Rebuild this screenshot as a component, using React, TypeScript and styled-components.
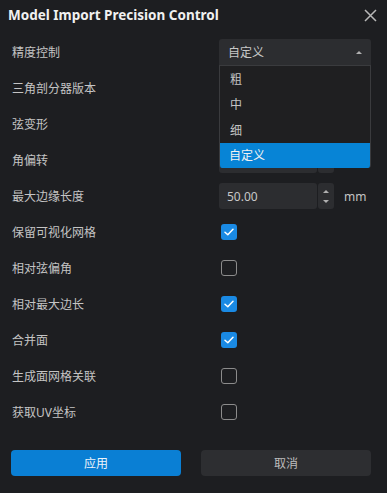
import React from 'react';
import styled, { createGlobalStyle } from 'styled-components';

const GlobalStyle = createGlobalStyle`
  html, body {
    margin: 0;
    padding: 0;
    background: #1d1e21;
  }
  * {
    box-sizing: border-box;
  }
`;

const Dialog = styled.div`
  width: 387px;
  height: 493px;
  background: #1d1e21;
  display: flex;
  flex-direction: column;
  font-family: 'Noto Sans', 'Noto Sans CJK SC', sans-serif;
  color: #c6c6c6;
  overflow: hidden;
`;

const Header = styled.div`
  height: 30px;
  padding: 0 9px 0 8px;
  display: flex;
  align-items: center;
  justify-content: space-between;
`;

const Title = styled.div`
  font-size: 13.5px;
  font-weight: 700;
  color: #f0f0f0;
`;

const CloseButton = styled.button`
  width: 16px;
  height: 16px;
  padding: 0;
  border: none;
  background: none;
  display: flex;
  align-items: center;
  justify-content: center;
  cursor: pointer;
`;

const Form = styled.div`
  padding: 4px 16px 0 12px;
  display: flex;
  flex-direction: column;
`;

const Row = styled.div`
  height: 36px;
  display: grid;
  grid-template-columns: 207px 1fr;
  align-items: center;
`;

const Label = styled.div`
  font-size: 12px;
  color: #c4c4c4;
`;

const Control = styled.div`
  display: flex;
  align-items: center;
`;

const SelectWrap = styled.div`
  position: relative;
  width: 152px;
`;

const SelectBox = styled.div`
  height: 26px;
  border-radius: 3px 3px 0 0;
  background: #2c2d30;
  padding: 0 9px;
  display: flex;
  align-items: center;
  justify-content: space-between;
  font-size: 12px;
  color: #c8c8c8;
`;

const Caret = styled.span<{ up?: boolean }>`
  width: 0;
  height: 0;
  border-left: 3px solid transparent;
  border-right: 3px solid transparent;
  ${({ up }) =>
    up ? 'border-bottom: 3px solid #b0b0b0;' : 'border-top: 3px solid #b0b0b0;'}
`;

const Menu = styled.div`
  position: absolute;
  top: 26px;
  left: 0;
  right: 0;
  z-index: 10;
  background: #1f1f21;
  border: 1px solid #3a3b3e;
  border-bottom: none;
  border-radius: 0 0 3px 3px;
  overflow: hidden;
`;

const MenuItem = styled.div<{ active?: boolean }>`
  height: 25.5px;
  padding: 0 10px;
  display: flex;
  align-items: center;
  font-size: 12px;
  color: ${({ active }) => (active ? '#f2f2f2' : '#c4c4c4')};
  background: ${({ active }) => (active ? '#0784d6' : 'transparent')};
  margin: ${({ active }) => (active ? '0 -1px' : '0')};
`;

const NumberInput = styled.div`
  width: 98px;
  height: 26px;
  border-radius: 3px;
  background: #2c2d30;
  padding: 0 8px;
  display: flex;
  align-items: center;
  font-size: 12px;
  color: #c8c8c8;
`;

const Spinner = styled.div`
  width: 16px;
  height: 26px;
  margin-left: 1px;
  border-radius: 3px;
  background: #2c2d30;
  display: flex;
  flex-direction: column;
  align-items: center;
  justify-content: space-between;
  padding: 7px 0 6px;
`;

const Unit = styled.span`
  margin-left: 10px;
  font-size: 12px;
  color: #c4c4c4;
`;

const Check = styled.div<{ checked?: boolean }>`
  width: 16px;
  height: 16px;
  margin-left: 2px;
  border-radius: 3px;
  display: flex;
  align-items: center;
  justify-content: center;
  background: ${({ checked }) => (checked ? '#1a8ae4' : 'transparent')};
  border: ${({ checked }) => (checked ? 'none' : '1.5px solid #8c8c8c')};
`;

const Footer = styled.div`
  margin-top: auto;
  padding: 0 16px 17px 11px;
  display: grid;
  grid-template-columns: 1fr 1fr;
  gap: 20px;
`;

const Button = styled.button<{ primary?: boolean }>`
  height: 26px;
  border: none;
  border-radius: 4px;
  font-family: 'Noto Sans', 'Noto Sans CJK SC', sans-serif;
  font-size: 12px;
  color: ${({ primary }) => (primary ? '#eef4fa' : '#bdbdbd')};
  background: ${({ primary }) => (primary ? '#0a7fd4' : '#2d2e31')};
  cursor: pointer;
`;

const CheckMark = () => (
  <svg width="10" height="8" viewBox="0 0 10 8" aria-hidden="true">
    <path d="M1 4.2 L3.8 6.8 L9 1.2" fill="none" stroke="#fff" strokeWidth="1.5" strokeLinecap="round" strokeLinejoin="round" />
  </svg>
);

// values of the fields hidden under the open menu are left blank
const NumberField: React.FC<{ value?: string; unit?: string }> = ({ value, unit }) => (
  <Control>
    <NumberInput>{value}</NumberInput>
    <Spinner>
      <Caret up />
      <Caret />
    </Spinner>
    {unit && <Unit>{unit}</Unit>}
  </Control>
);

const checks: [string, boolean][] = [
  ['保留可视化网格', true],
  ['相对弦偏角', false],
  ['相对最大边长', true],
  ['合并面', true],
  ['生成面网格关联', false],
  ['获取UV坐标', false],
];

export default function App() {
  return (
    <>
      <GlobalStyle />
      <Dialog>
        <Header>
          <Title>Model Import Precision Control</Title>
          <CloseButton aria-label="close">
            <svg width="13" height="13" viewBox="0 0 13 13">
              <path d="M1 1 L12 12 M12 1 L1 12" stroke="#b8b8b8" strokeWidth="1.5" />
            </svg>
          </CloseButton>
        </Header>
        <Form>
          <Row>
            <Label>精度控制</Label>
            <SelectWrap>
              <SelectBox>
                <span>自定义</span>
                <Caret up />
              </SelectBox>
              <Menu>
                <MenuItem>粗</MenuItem>
                <MenuItem>中</MenuItem>
                <MenuItem>细</MenuItem>
                <MenuItem active>自定义</MenuItem>
              </Menu>
            </SelectWrap>
          </Row>
          <Row>
            <Label>三角剖分器版本</Label>
            <SelectWrap>
              <SelectBox>
                <span />
                <Caret />
              </SelectBox>
            </SelectWrap>
          </Row>
          <Row>
            <Label>弦变形</Label>
            <NumberField />
          </Row>
          <Row>
            <Label>角偏转</Label>
            <NumberField />
          </Row>
          <Row>
            <Label>最大边缘长度</Label>
            <NumberField value="50.00" unit="mm" />
          </Row>
          {checks.map(([label, on]) => (
            <Row key={label}>
              <Label>{label}</Label>
              <Control>
                <Check checked={on}>{on && <CheckMark />}</Check>
              </Control>
            </Row>
          ))}
        </Form>
        <Footer>
          <Button primary>应用</Button>
          <Button>取消</Button>
        </Footer>
      </Dialog>
    </>
  );
}
